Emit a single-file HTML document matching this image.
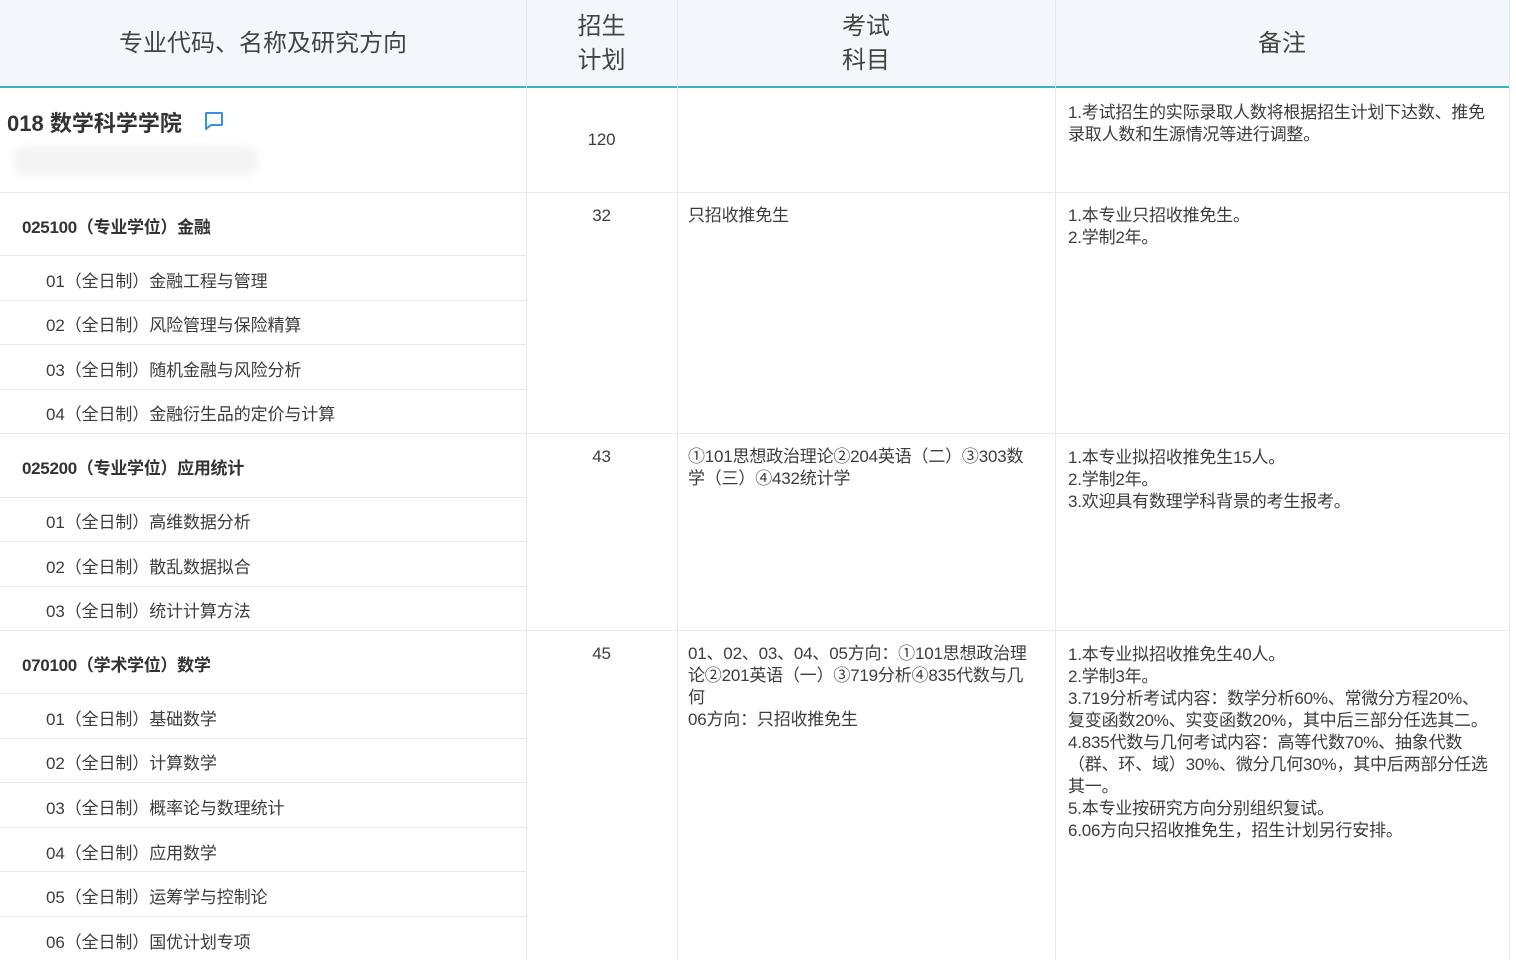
<!DOCTYPE html>
<html><head><meta charset="utf-8"><style>
body{margin:0;width:1516px;height:960px;overflow:hidden;background:#fff;font-family:"Liberation Sans","Noto Sans CJK SC",sans-serif;color:#3a3a3a;position:relative}
.a{position:absolute}
.hd{left:0;top:0;width:1509px;height:86px;background:#f3f7fc;border-bottom:2px solid #3fb2c0}
.h{font-size:24px;color:#444;text-align:center;line-height:34px}
.vl{width:1px;background:#e6e9ee;top:0;height:960px}
.hl{height:1px;background:#e6e9ee}
.t{font-size:17px;line-height:22px;color:#3d3d3d;letter-spacing:-0.2px}
.b{font-weight:bold;font-size:17px;color:#333;letter-spacing:-0.3px}
.sub{font-size:17px;color:#3d3d3d;left:46px;letter-spacing:-0.1px}
</style></head><body>
<div class="a hd"></div>
<div class="a vl" style="left:526px"></div>
<div class="a vl" style="left:677px"></div>
<div class="a vl" style="left:1055px"></div>
<div class="a vl" style="left:1509px"></div>
<div class="a h" style="left:0;width:526px;top:27px">专业代码、名称及研究方向</div>
<div class="a h" style="left:526px;width:151px;top:10px">招生<br>计划</div>
<div class="a h" style="left:677px;width:378px;top:10px">考试<br>科目</div>
<div class="a h" style="left:1055px;width:454px;top:27px">备注</div>

<div class="a" style="left:7px;top:106px;font-size:22px;font-weight:bold;color:#333">018 数学科学学院</div>
<svg class="a" style="left:204px;top:111px" width="20" height="20" viewBox="0 0 20 20"><path d="M2 2h16v12H7l-5 4z" fill="none" stroke="#3a8ee6" stroke-width="2" stroke-linejoin="round"/></svg>
<div class="a" style="left:14px;top:146px;width:244px;height:30px;background:#f4f4f4;border-radius:12px;filter:blur(4px)"></div>
<div class="a t" style="left:526px;width:151px;text-align:center;top:129px">120</div>
<div class="a t" style="left:1068px;top:102px;width:422px">1.考试招生的实际录取人数将根据招生计划下达数、推免录取人数和生源情况等进行调整。</div>
<div class="a hl" style="left:0;width:1509px;top:192px"></div>

<div class="a b" style="left:22px;top:213px">025100（专业学位）金融</div>
<div class="a hl" style="left:0;width:526px;top:255px"></div>
<div class="a sub" style="top:267px">01（全日制）金融工程与管理</div>
<div class="a hl" style="left:0;width:526px;top:300px"></div>
<div class="a sub" style="top:311px">02（全日制）风险管理与保险精算</div>
<div class="a hl" style="left:0;width:526px;top:344px"></div>
<div class="a sub" style="top:356px">03（全日制）随机金融与风险分析</div>
<div class="a hl" style="left:0;width:526px;top:389px"></div>
<div class="a sub" style="top:400px">04（全日制）金融衍生品的定价与计算</div>
<div class="a t" style="left:526px;width:151px;text-align:center;top:205px">32</div>
<div class="a t" style="left:688px;top:205px">只招收推免生</div>
<div class="a t" style="left:1068px;top:205px">1.本专业只招收推免生。<br>2.学制2年。</div>
<div class="a hl" style="left:0;width:1509px;top:433px"></div>

<div class="a b" style="left:22px;top:454px">025200（专业学位）应用统计</div>
<div class="a hl" style="left:0;width:526px;top:497px"></div>
<div class="a sub" style="top:508px">01（全日制）高维数据分析</div>
<div class="a hl" style="left:0;width:526px;top:541px"></div>
<div class="a sub" style="top:553px">02（全日制）散乱数据拟合</div>
<div class="a hl" style="left:0;width:526px;top:586px"></div>
<div class="a sub" style="top:597px">03（全日制）统计计算方法</div>
<div class="a t" style="left:526px;width:151px;text-align:center;top:446px">43</div>
<div class="a t" style="left:688px;top:446px;width:346px">①101思想政治理论②204英语（二）③303数学（三）④432统计学</div>
<div class="a t" style="left:1068px;top:447px">1.本专业拟招收推免生15人。<br>2.学制2年。<br>3.欢迎具有数理学科背景的考生报考。</div>
<div class="a hl" style="left:0;width:1509px;top:630px"></div>

<div class="a b" style="left:22px;top:651px">070100（学术学位）数学</div>
<div class="a hl" style="left:0;width:526px;top:693px"></div>
<div class="a sub" style="top:705px">01（全日制）基础数学</div>
<div class="a hl" style="left:0;width:526px;top:738px"></div>
<div class="a sub" style="top:749px">02（全日制）计算数学</div>
<div class="a hl" style="left:0;width:526px;top:782px"></div>
<div class="a sub" style="top:794px">03（全日制）概率论与数理统计</div>
<div class="a hl" style="left:0;width:526px;top:827px"></div>
<div class="a sub" style="top:839px">04（全日制）应用数学</div>
<div class="a hl" style="left:0;width:526px;top:871px"></div>
<div class="a sub" style="top:883px">05（全日制）运筹学与控制论</div>
<div class="a hl" style="left:0;width:526px;top:916px"></div>
<div class="a sub" style="top:928px">06（全日制）国优计划专项</div>
<div class="a t" style="left:526px;width:151px;text-align:center;top:643px">45</div>
<div class="a t" style="left:688px;top:643px;width:346px">01、02、03、04、05方向：①101思想政治理论②201英语（一）③719分析④835代数与几何<br>06方向：只招收推免生</div>
<div class="a t" style="left:1068px;top:644px;width:422px">1.本专业拟招收推免生40人。<br>2.学制3年。<br>3.719分析考试内容：数学分析60%、常微分方程20%、复变函数20%、实变函数20%，其中后三部分任选其二。<br>4.835代数与几何考试内容：高等代数70%、抽象代数（群、环、域）30%、微分几何30%，其中后两部分任选其一。<br>5.本专业按研究方向分别组织复试。<br>6.06方向只招收推免生，招生计划另行安排。</div>
</body></html>
